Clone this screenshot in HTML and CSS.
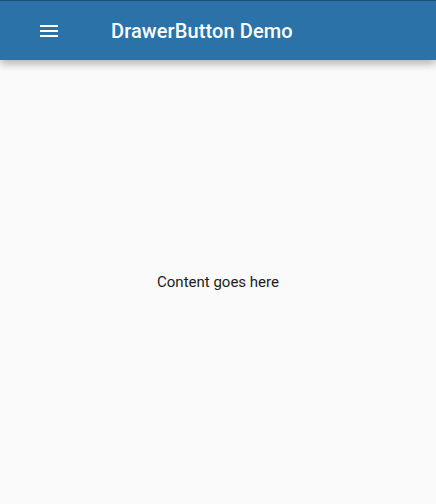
FILE: index.html
```html
<!DOCTYPE html>
<html>
<head>
<meta charset="utf-8">
<link rel="stylesheet" href="styles.css">
</head>
<body>
<div class="app">
  <header class="appbar">
    <button class="menu-btn" aria-label="Open navigation menu">
      <svg width="24" height="24" viewBox="0 0 24 24"><path d="M3 18h18v-2H3v2zm0-5h18v-2H3v2zm0-7v2h18V6H3z" fill="#fff"/></svg>
    </button>
    <h1 class="title">DrawerButton Demo</h1>
  </header>
  <main class="content">
    <p class="body-text">Content goes here</p>
  </main>
</div>
</body>
</html>
```
FILE: styles.css
```css
html, body {
  margin: 0;
  padding: 0;
  height: 100%;
}
body {
  background: #fafafa;
  font-family: Roboto, "Liberation Sans", sans-serif;
}
.app {
  display: flex;
  flex-direction: column;
  height: 100%;
}
.appbar {
  position: relative;
  z-index: 1;
  height: 60px;
  box-sizing: border-box;
  border-top: 1px solid #1d4f75;
  background: #2b72a8;
  display: flex;
  align-items: center;
  box-shadow: 0 4px 8px rgba(0,0,0,0.28);
}
.menu-btn {
  width: 48px;
  height: 48px;
  margin-left: 25px;
  padding: 0;
  border: 0;
  background: transparent;
  display: flex;
  align-items: center;
  justify-content: center;
}
.title {
  margin: 0 0 0 38px;
  font-size: 20px;
  font-weight: 500;
  color: #fff;
  letter-spacing: 0.1px;
}
.content {
  flex: 1;
  display: flex;
  align-items: center;
  justify-content: center;
}
.body-text {
  margin: 0;
  font-size: 15px;
  color: #1c1c1c;
}
```
